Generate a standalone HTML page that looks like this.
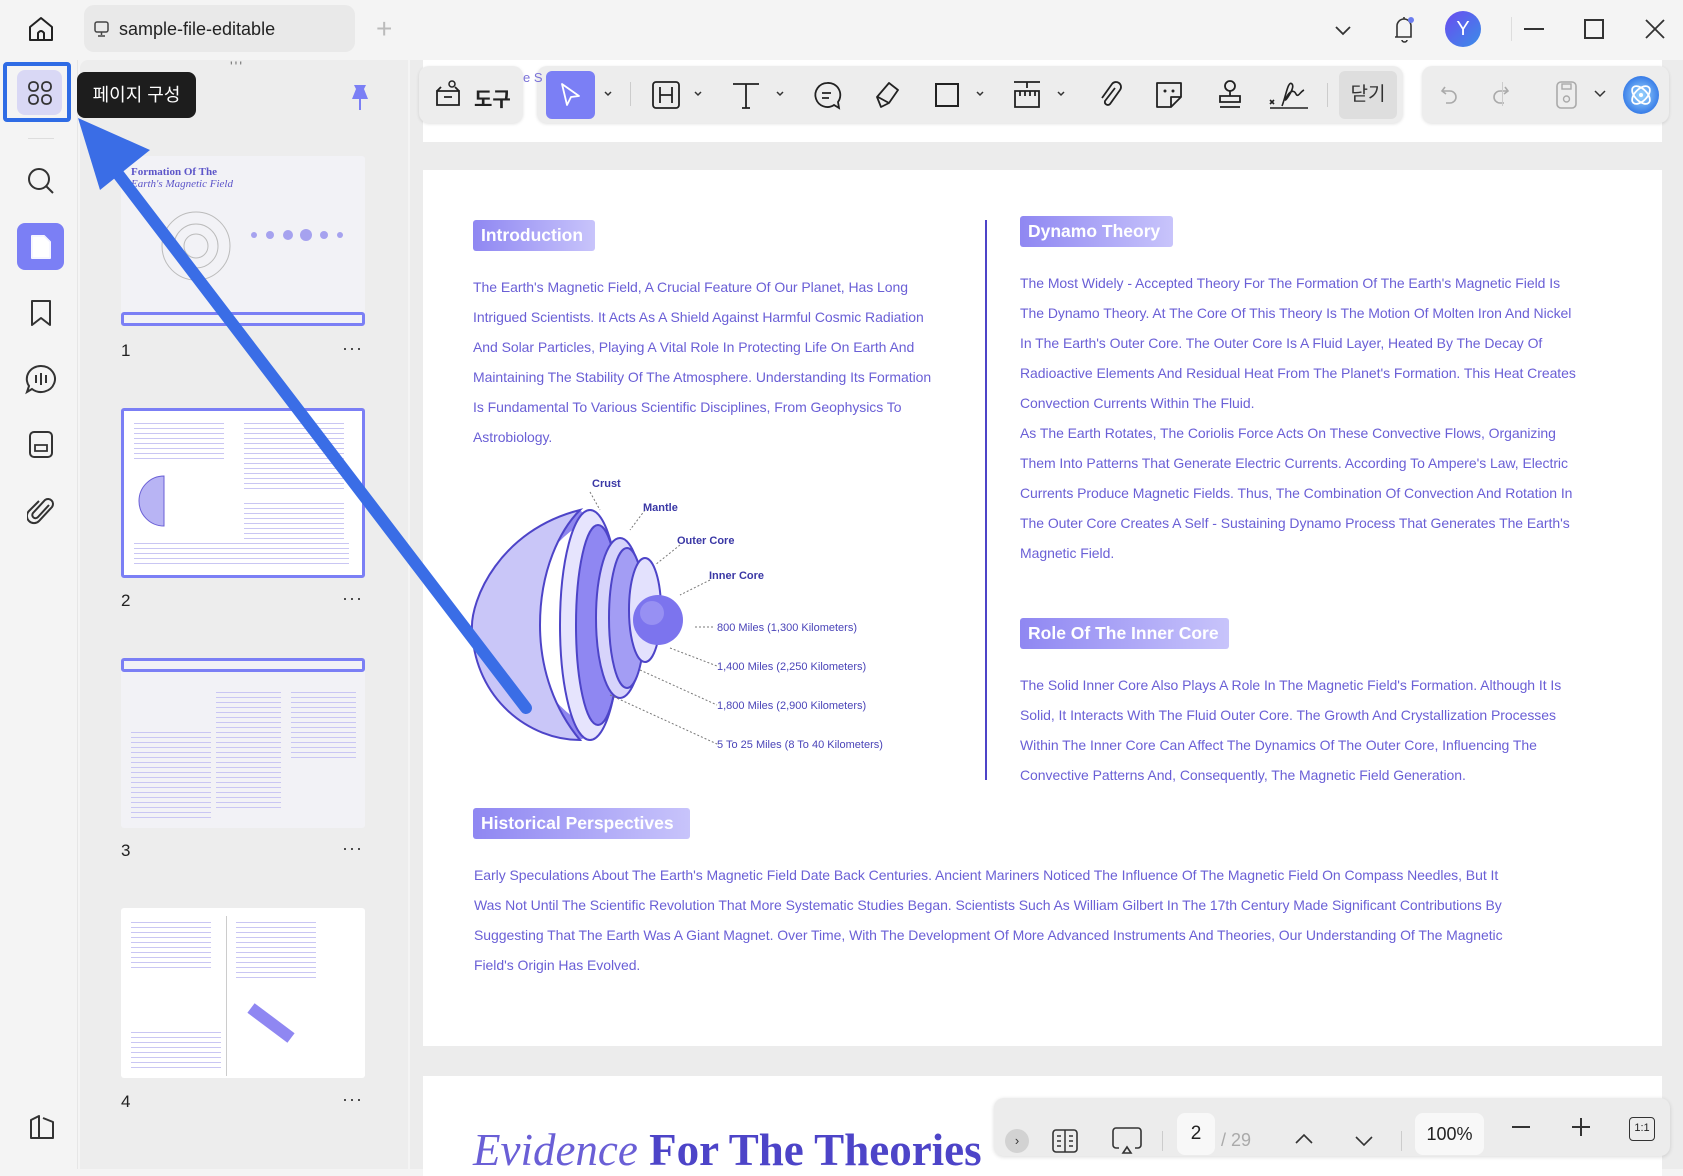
<!DOCTYPE html>
<html><head><meta charset="utf-8"><style>
*{margin:0;padding:0;box-sizing:border-box}
body{width:1683px;height:1169px;background:#f4f4f4;position:relative;overflow:hidden;font-family:"Liberation Sans","Noto Sans CJK KR",sans-serif}
.a{position:absolute}
.t{position:absolute;color:#6a5fd6;font-size:14px;white-space:nowrap;letter-spacing:-0.05px}
.lbl{position:absolute;height:31px;border-radius:3px;background:linear-gradient(90deg,#8f87f2,#c8c4fb);color:#fff;font-weight:bold;font-size:17.5px;line-height:31px;padding-left:8px}
.thumb{position:absolute;left:121px;width:244px;height:170px;background:#f2f2f6;border-radius:3px}
.num{position:absolute;left:121px;font-size:17px;color:#222}
.dots{position:absolute;left:342px;font-size:18px;color:#333;letter-spacing:1px}
svg{position:absolute}
</style></head><body>
<!-- top bar -->
<svg style="left:26px;top:14px" width="30" height="30" viewBox="0 0 30 30"><path d="M4 13 L15 4 L26 13 V26 H4 Z M12 26 V19 Q15 15 18 19 V26" fill="none" stroke="#222" stroke-width="2" stroke-linejoin="round"/></svg>
<div class="a" style="left:84px;top:5px;width:271px;height:47px;background:#e9e9e9;border-radius:10px"></div>
<svg style="left:93px;top:20px" width="18" height="18" viewBox="0 0 18 18"><rect x="2" y="2" width="13" height="10" rx="2" fill="none" stroke="#444" stroke-width="1.5"/><path d="M8.5 12v3M5 16h7" stroke="#444" stroke-width="1.5"/></svg>
<div class="a" style="left:119px;top:19px;font-size:18px;color:#222">sample-file-editable</div>
<div class="a" style="left:376px;top:13px;font-size:28px;color:#bbb;font-weight:200">+</div>
<svg style="left:1333px;top:20px" width="20" height="20"><path d="M3 7l7 7 7-7" fill="none" stroke="#333" stroke-width="1.8"/></svg>
<svg style="left:1390px;top:13px" width="28" height="32" viewBox="0 0 28 32"><path d="M7 24V13a7 7 0 0 1 14 0v11H5M12 27a2.5 2 0 0 0 5 0M14 4v2" fill="none" stroke="#333" stroke-width="1.6"/><circle cx="21" cy="7" r="3" fill="#6b7df0"/></svg>
<div class="a" style="left:1445px;top:11px;width:36px;height:36px;border-radius:50%;background:linear-gradient(135deg,#6a4bf0,#3a8ee8);color:#fff;text-align:center;line-height:36px;font-size:20px">Y</div>
<div class="a" style="left:1511px;top:17px;width:1px;height:24px;background:#ddd"></div>
<div class="a" style="left:1524px;top:28px;width:20px;height:2px;background:#333"></div>
<div class="a" style="left:1584px;top:19px;width:20px;height:20px;border:2px solid #333"></div>
<svg style="left:1644px;top:18px" width="22" height="22"><path d="M2 2l18 18M20 2L2 20" stroke="#333" stroke-width="1.8"/></svg>

<!-- left rail -->
<div class="a" style="left:0;top:60px;width:78px;height:1109px;background:#f4f4f4;border-right:1px solid #e6e6e6"></div>
<div class="a" style="left:3px;top:62px;width:68px;height:60px;border:4px solid #2f6ce5;border-radius:4px"></div>
<div class="a" style="left:17px;top:70px;width:45px;height:45px;background:#d9d8f5;border-radius:8px"></div>
<svg style="left:27px;top:80px" width="26" height="26"><g fill="none" stroke="#333" stroke-width="1.8"><rect x="2" y="2" width="9" height="9" rx="4"/><rect x="15" y="2" width="9" height="9" rx="4"/><rect x="2" y="15" width="9" height="9" rx="4"/><rect x="15" y="15" width="9" height="9" rx="4"/></g></svg>
<div class="a" style="left:28px;top:138px;width:26px;height:1px;background:#ddd"></div>
<svg style="left:26px;top:166px" width="30" height="30"><circle cx="13" cy="13" r="10" fill="none" stroke="#333" stroke-width="2"/><path d="M20 20l7 7" stroke="#333" stroke-width="2"/></svg>
<div class="a" style="left:17px;top:223px;width:47px;height:47px;background:#7b7ff5;border-radius:8px"></div>
<svg style="left:29px;top:233px" width="24" height="28"><path d="M3 3h12l6 6v16H3z" fill="#fff" stroke="#fff" stroke-width="2" stroke-linejoin="round"/><path d="M3 3h12l6 6v16H3z" fill="none" stroke="#eef" stroke-width="1"/></svg>
<svg style="left:28px;top:298px" width="26" height="30"><path d="M4 3h18v24l-9-7-9 7z" fill="none" stroke="#333" stroke-width="2" stroke-linejoin="round"/></svg>
<svg style="left:24px;top:363px" width="34" height="32"><path d="M17 3a14 13 0 1 1-9 23l-5 3 2-6A14 13 0 0 1 17 3z" fill="none" stroke="#333" stroke-width="2"/><path d="M12 12v8M17 10v12M22 12v8" stroke="#333" stroke-width="2"/></svg>
<svg style="left:27px;top:429px" width="28" height="30"><rect x="3" y="3" width="22" height="25" rx="4" fill="none" stroke="#333" stroke-width="2"/><path d="M8 16h12v6H8z" fill="none" stroke="#333" stroke-width="1.8"/></svg>
<svg style="left:27px;top:495px" width="30" height="32"><path d="M22 10L11 22a3 3 0 0 1-5-4L18 5a5 5 0 0 1 7 7L12 26a7 7 0 0 1-10-10L12 6" fill="none" stroke="#333" stroke-width="2"/></svg>
<svg style="left:27px;top:1112px" width="30" height="30"><path d="M4 26V8l8-4v22zM12 26h14V10l-10-4" fill="none" stroke="#333" stroke-width="2" stroke-linejoin="round"/></svg>

<!-- thumbnail panel -->
<div class="a" style="left:80px;top:60px;width:328px;height:1109px;background:#ededed;border-radius:8px 0 0 0"></div>
<div class="a" style="left:230px;top:58px;font-size:14px;color:#777;letter-spacing:2px">'''</div>
<svg style="left:348px;top:82px" width="24" height="30"><path d="M6 3h12l-2 4 4 10H4l4-10z" fill="#7b7ff5"/><path d="M12 17v11" stroke="#7b7ff5" stroke-width="2"/></svg>
<div class="thumb" style="top:156px;height:170px">
 <div class="a" style="left:10px;top:10px;font:bold 11px 'Liberation Serif';color:#5d56c9">Formation Of The<br><i style="font-weight:normal">Earth's Magnetic Field</i></div>
 <svg style="left:30px;top:50px" width="90" height="80"><g fill="none" stroke="#bbb"><circle cx="45" cy="40" r="12"/><circle cx="45" cy="40" r="22"/><circle cx="45" cy="40" r="34"/></g></svg>
 <div class="a" style="left:125px;top:72px;width:100px;height:12px;"><svg width="100" height="14"><g fill="#a6a2ef"><circle cx="8" cy="7" r="3"/><circle cx="24" cy="7" r="4"/><circle cx="42" cy="7" r="5"/><circle cx="60" cy="7" r="6"/><circle cx="78" cy="7" r="4"/><circle cx="94" cy="7" r="3"/></g></svg></div>
 <div class="a" style="left:0;bottom:0;width:244px;height:14px;border:3px solid #7b7ff5;border-radius:3px"></div>
</div>
<div class="num" style="top:341px">1</div><div class="dots" style="top:338px">···</div>
<div class="thumb" style="top:408px;background:#fff;border:3px solid #7b7ff5">
 <div class="a" style="left:10px;top:60px;width:60px;height:60px;"><svg width="60" height="60"><path d="M30 5a25 25 0 1 0 0 50z" fill="#b8b4f4" stroke="#6a5fd6"/></svg></div>
 <div class="a" style="left:10px;top:8px;width:90px;height:40px;background:repeating-linear-gradient(#fff 0 4px,#c9c6f3 4px 5px)"></div>
 <div class="a" style="left:120px;top:8px;width:100px;height:70px;background:repeating-linear-gradient(#fff 0 4px,#c9c6f3 4px 5px)"></div>
 <div class="a" style="left:120px;top:88px;width:100px;height:40px;background:repeating-linear-gradient(#fff 0 4px,#c9c6f3 4px 5px)"></div>
 <div class="a" style="left:10px;top:128px;width:215px;height:28px;background:repeating-linear-gradient(#fff 0 4px,#c9c6f3 4px 5px)"></div>
</div>
<div class="num" style="top:591px">2</div><div class="dots" style="top:588px">···</div>
<div class="thumb" style="top:658px">
 <div class="a" style="left:0;top:0;width:244px;height:14px;border:3px solid #7b7ff5;border-radius:3px"></div>
 <div class="a" style="left:10px;top:70px;width:80px;height:90px;background:repeating-linear-gradient(#f2f2f6 0 4px,#c9c6f3 4px 5px)"></div>
 <div class="a" style="left:95px;top:30px;width:65px;height:120px;background:repeating-linear-gradient(#f2f2f6 0 4px,#c9c6f3 4px 5px)"></div>
 <div class="a" style="left:170px;top:30px;width:65px;height:70px;background:repeating-linear-gradient(#f2f2f6 0 4px,#c9c6f3 4px 5px)"></div>
</div>
<div class="num" style="top:841px">3</div><div class="dots" style="top:838px">···</div>
<div class="thumb" style="top:908px;background:#fff">
 <div class="a" style="left:10px;top:10px;width:80px;height:50px;background:repeating-linear-gradient(#fff 0 4px,#c9c6f3 4px 5px)"></div>
 <div class="a" style="left:105px;top:8px;width:1px;height:160px;background:#ccc"></div>
 <div class="a" style="left:115px;top:10px;width:80px;height:60px;background:repeating-linear-gradient(#fff 0 4px,#c9c6f3 4px 5px)"></div>
 <div class="a" style="left:10px;top:120px;width:90px;height:40px;background:repeating-linear-gradient(#fff 0 4px,#c9c6f3 4px 5px)"></div>
 <svg style="left:120px;top:90px" width="60" height="50"><path d="M10 10l40 30" stroke="#8f87f2" stroke-width="12"/></svg>
</div>
<div class="num" style="top:1092px">4</div><div class="dots" style="top:1089px">···</div>

<!-- main -->
<div class="a" style="left:410px;top:60px;width:1273px;height:1109px;background:#ececec"></div>
<div class="a" style="left:423px;top:60px;width:1239px;height:82px;background:#fff"></div>
<div class="a" style="left:423px;top:170px;width:1239px;height:876px;background:#fff"></div>
<div class="a" style="left:423px;top:1076px;width:1239px;height:100px;background:#fff"></div>

<!-- toolbar -->
<div class="a" style="left:419px;top:66px;width:104px;height:57px;background:#ededed;border-radius:10px;box-shadow:0 1px 3px rgba(0,0,0,.12)"></div>
<svg style="left:433px;top:79px" width="30" height="30"><path d="M4 12h22v14H4z M4 12l4-4M26 12l-4-4M11 18h8" fill="none" stroke="#222" stroke-width="1.8"/><circle cx="19" cy="5" r="3" fill="none" stroke="#222" stroke-width="1.5"/></svg>
<div class="a" style="left:474px;top:83px;font-size:20px;font-weight:bold;color:#222">도구</div>
<div class="a" style="left:537px;top:66px;width:866px;height:57px;background:#ededed;border-radius:10px;box-shadow:0 1px 3px rgba(0,0,0,.12)"></div>
<div class="a" style="left:546px;top:71px;width:49px;height:48px;background:#7b7ff5;border-radius:6px"></div>
<svg style="left:557px;top:81px" width="28" height="28"><path d="M5 3l17 12-8 1-4 8z" fill="none" stroke="#fff" stroke-width="1.8" stroke-linejoin="round"/></svg>
<div class="a" style="left:630px;top:82px;width:1px;height:24px;background:#ccc"></div>
<svg style="left:600px;top:88px" width="800" height="14"><g fill="none" stroke="#333" stroke-width="1.5"><path d="M5 4l3 3 3-3"/><path d="M95 4l3 3 3-3"/><path d="M177 4l3 3 3-3"/><path d="M377 4l3 3 3-3"/><path d="M458 4l3 3 3-3"/></g></svg>
<svg style="left:650px;top:79px" width="32" height="32"><rect x="3" y="3" width="26" height="26" rx="3" fill="none" stroke="#222" stroke-width="1.8"/><path d="M10 8v16M22 8v16M10 16h12" stroke="#222" stroke-width="1.8"/></svg>
<svg style="left:730px;top:79px" width="32" height="32"><path d="M3 5h26M16 5v24M12 29h8" fill="none" stroke="#222" stroke-width="1.8"/></svg>
<svg style="left:812px;top:80px" width="30" height="30"><path d="M15 3a12 12 0 1 0 7 22l5 3-1-6A12 12 0 0 0 15 3z" fill="none" stroke="#222" stroke-width="1.8"/><path d="M10 13h9M10 18h7" stroke="#222" stroke-width="1.8"/></svg>
<svg style="left:873px;top:79px" width="30" height="32"><path d="M8 28l-4-10 12-14 9 7-9 13z M5 18l11 6" fill="none" stroke="#222" stroke-width="1.8" stroke-linejoin="round"/></svg>
<div class="a" style="left:935px;top:83px;width:24px;height:24px;border:2px solid #222"></div>
<svg style="left:1011px;top:79px" width="32" height="32"><path d="M3 3h26M16 3v6M4 12h24v16H4z M9 12v5M14 12v5M19 12v5M24 12v5" fill="none" stroke="#222" stroke-width="1.8"/></svg>
<svg style="left:1095px;top:79px" width="30" height="32"><path d="M20 9L10 22a3 3 0 0 0 5 3L25 11a5 5 0 0 0-8-6L7 19" fill="none" stroke="#222" stroke-width="1.8"/></svg>
<svg style="left:1153px;top:79px" width="32" height="32"><path d="M4 4h24v14l-10 10H4z M28 18h-10v10" fill="none" stroke="#222" stroke-width="1.8" stroke-linejoin="round"/><circle cx="12" cy="12" r="1.5" fill="#222"/><circle cx="20" cy="12" r="1.5" fill="#222"/></svg>
<svg style="left:1214px;top:78px" width="32" height="34"><circle cx="16" cy="8" r="5" fill="none" stroke="#222" stroke-width="1.8"/><path d="M16 13v5M6 18h20v6H6zM6 29h20" fill="none" stroke="#222" stroke-width="1.8"/></svg>
<svg style="left:1268px;top:78px" width="44" height="34"><path d="M2 22l4 4M6 22l-4 4M14 28c4-10 6-26 10-22s-10 22-6 14 8-8 10-4 4-2 8-4M2 30h38" fill="none" stroke="#222" stroke-width="1.6"/></svg>
<div class="a" style="left:1327px;top:83px;width:1px;height:24px;background:#ccc"></div>
<div class="a" style="left:1339px;top:71px;width:58px;height:48px;background:#dedede;border-radius:6px;font-size:19px;color:#333;text-align:center;line-height:48px">닫기</div>
<div class="a" style="left:1422px;top:66px;width:247px;height:57px;background:#ededed;border-radius:10px;box-shadow:0 1px 3px rgba(0,0,0,.12)"></div>
<svg style="left:1440px;top:82px" width="100" height="26"><g fill="none" stroke="#aaa" stroke-width="1.6"><path d="M5 5L2 9l4 3M2 9h8a6 6 0 0 1 0 12H6"/><path d="M65 5l3 4-4 3M68 9h-8a6 6 0 0 0 0 12h4"/></g></svg>
<div class="a" style="left:1502px;top:82px;width:1px;height:24px;background:#ccc"></div>
<svg style="left:1554px;top:80px" width="26" height="30"><rect x="3" y="2" width="19" height="26" rx="4" fill="none" stroke="#aaa" stroke-width="1.6"/><rect x="8" y="4" width="9" height="5" fill="none" stroke="#aaa" stroke-width="1.4"/><circle cx="12.5" cy="19" r="3" fill="none" stroke="#aaa" stroke-width="1.4"/></svg>
<svg style="left:1593px;top:88px" width="14" height="12"><path d="M2 3l5 5 5-5" fill="none" stroke="#333" stroke-width="1.5"/></svg>
<div class="a" style="left:1623px;top:76px;width:36px;height:38px;border-radius:50%;background:radial-gradient(circle,#9ed8ff,#3a7ee8 70%)"></div>
<svg style="left:1627px;top:81px" width="28" height="28"><g fill="none" stroke="#fff" stroke-width="1.8"><ellipse cx="14" cy="14" rx="11" ry="6" transform="rotate(45 14 14)"/><ellipse cx="14" cy="14" rx="11" ry="6" transform="rotate(-45 14 14)"/></g><circle cx="14" cy="14" r="2" fill="#fff"/></svg>
<div class="a" style="left:523px;top:70px;font-size:13px;color:#7a72d8">e S</div>

<!-- page content -->
<div class="lbl" style="left:473px;top:220px;width:122px">Introduction</div>
<div class="t" style="left:473px;top:279px">The Earth's Magnetic Field, A Crucial Feature Of Our Planet, Has Long</div>
<div class="t" style="left:473px;top:309px">Intrigued Scientists. It Acts As A Shield Against Harmful Cosmic Radiation</div>
<div class="t" style="left:473px;top:339px">And Solar Particles, Playing A Vital Role In Protecting Life On Earth And</div>
<div class="t" style="left:473px;top:369px">Maintaining The Stability Of The Atmosphere. Understanding Its Formation</div>
<div class="t" style="left:473px;top:399px">Is Fundamental To Various Scientific Disciplines, From Geophysics To</div>
<div class="t" style="left:473px;top:429px">Astrobiology.</div>

<svg style="left:460px;top:470px" width="450" height="300" viewBox="0 0 450 300">
 <path d="M120 40 A110 125 0 0 0 120 270 L140 260 A95 110 0 0 1 130 50 Z" fill="#8e86ee"/>
 <path d="M120 40 C40 60 10 130 12 160 C15 230 70 270 120 270 C95 240 80 200 80 155 C80 100 100 60 120 40Z" fill="#c9c6f8" stroke="#4d44c8" stroke-width="2"/>
 <ellipse cx="130" cy="155" rx="30" ry="115" fill="#e6e4fd" stroke="#4d44c8" stroke-width="2"/>
 <ellipse cx="138" cy="155" rx="22" ry="100" fill="#8f87f2" stroke="#4d44c8" stroke-width="2"/>
 <ellipse cx="160" cy="148" rx="24" ry="80" fill="#d7d4fb" stroke="#4d44c8" stroke-width="2"/>
 <ellipse cx="167" cy="148" rx="18" ry="70" fill="#a39df4" stroke="#4d44c8" stroke-width="2"/>
 <ellipse cx="185" cy="140" rx="16" ry="52" fill="#e3e1fd" stroke="#4d44c8" stroke-width="2"/>
 <circle cx="198" cy="150" r="25" fill="#7c74ee"/>
 <circle cx="192" cy="143" r="12" fill="#a29cf5" opacity=".7"/>
 <g stroke="#777" stroke-width="1" stroke-dasharray="2 2" fill="none">
  <path d="M235 157H255M210 178L257 196M180 200L257 235M150 225L257 274M130 22L140 40M185 40L170 60M220 75L195 95M250 110L220 125"/>
 </g>
 <g font-size="11" font-weight="bold" fill="#3a37a5" font-family="Liberation Sans">
  <text x="132" y="17">Crust</text><text x="183" y="41">Mantle</text><text x="217" y="74">Outer Core</text><text x="249" y="109">Inner Core</text>
 </g>
 <g font-size="11" fill="#4a44b8" font-family="Liberation Sans">
  <text x="257" y="161">800 Miles (1,300 Kilometers)</text>
  <text x="257" y="200">1,400 Miles (2,250 Kilometers)</text>
  <text x="257" y="239">1,800 Miles (2,900 Kilometers)</text>
  <text x="257" y="278">5 To 25 Miles (8 To 40 Kilometers)</text>
 </g>
</svg>

<div class="a" style="left:985px;top:220px;width:2px;height:560px;background:#4d44c8"></div>

<div class="lbl" style="left:1020px;top:216px;width:153px">Dynamo Theory</div>
<div class="t" style="left:1020px;top:275px">The Most Widely - Accepted Theory For The Formation Of The Earth's Magnetic Field Is</div>
<div class="t" style="left:1020px;top:305px">The Dynamo Theory. At The Core Of This Theory Is The Motion Of Molten Iron And Nickel</div>
<div class="t" style="left:1020px;top:335px">In The Earth's Outer Core. The Outer Core Is A Fluid Layer, Heated By The Decay Of</div>
<div class="t" style="left:1020px;top:365px">Radioactive Elements And Residual Heat From The Planet's Formation. This Heat Creates</div>
<div class="t" style="left:1020px;top:395px">Convection Currents Within The Fluid.</div>
<div class="t" style="left:1020px;top:425px">As The Earth Rotates, The Coriolis Force Acts On These Convective Flows, Organizing</div>
<div class="t" style="left:1020px;top:455px">Them Into Patterns That Generate Electric Currents. According To Ampere's Law, Electric</div>
<div class="t" style="left:1020px;top:485px">Currents Produce Magnetic Fields. Thus, The Combination Of Convection And Rotation In</div>
<div class="t" style="left:1020px;top:515px">The Outer Core Creates A Self - Sustaining Dynamo Process That Generates The Earth's</div>
<div class="t" style="left:1020px;top:545px">Magnetic Field.</div>

<div class="lbl" style="left:1020px;top:618px;width:209px">Role Of The Inner Core</div>
<div class="t" style="left:1020px;top:677px">The Solid Inner Core Also Plays A Role In The Magnetic Field's Formation. Although It Is</div>
<div class="t" style="left:1020px;top:707px">Solid, It Interacts With The Fluid Outer Core. The Growth And Crystallization Processes</div>
<div class="t" style="left:1020px;top:737px">Within The Inner Core Can Affect The Dynamics Of The Outer Core, Influencing The</div>
<div class="t" style="left:1020px;top:767px">Convective Patterns And, Consequently, The Magnetic Field Generation.</div>

<div class="lbl" style="left:473px;top:808px;width:217px">Historical Perspectives</div>
<div class="t" style="left:474px;top:867px">Early Speculations About The Earth's Magnetic Field Date Back Centuries. Ancient Mariners Noticed The Influence Of The Magnetic Field On Compass Needles, But It</div>
<div class="t" style="left:474px;top:897px">Was Not Until The Scientific Revolution That More Systematic Studies Began. Scientists Such As William Gilbert In The 17th Century Made Significant Contributions By</div>
<div class="t" style="left:474px;top:927px">Suggesting That The Earth Was A Giant Magnet. Over Time, With The Development Of More Advanced Instruments And Theories, Our Understanding Of The Magnetic</div>
<div class="t" style="left:474px;top:957px">Field's Origin Has Evolved.</div>

<div class="a" style="left:473px;top:1124px;font-family:'Liberation Serif',serif;font-size:45px;color:#4d44c8;white-space:nowrap"><i style="color:#6a5fd6">Evidence</i> <b>For The Theories</b></div>

<!-- bottom bar -->
<div class="a" style="left:994px;top:1098px;width:676px;height:58px;background:#ececec;border-radius:10px;box-shadow:0 1px 4px rgba(0,0,0,.15)"></div>
<div class="a" style="left:1005px;top:1129px;width:24px;height:24px;border-radius:50%;background:#d2d2d2;text-align:center;line-height:23px;font-size:13px;color:#333">›</div>
<svg style="left:1051px;top:1127px" width="28" height="28"><rect x="2" y="3" width="24" height="22" rx="3" fill="none" stroke="#333" stroke-width="1.6"/><path d="M14 3v22M6 9h4M6 14h4M6 19h4M18 9h4M18 14h4M18 19h4" stroke="#333" stroke-width="1.5"/></svg>
<svg style="left:1111px;top:1126px" width="32" height="30"><path d="M8 22H5a3 3 0 0 1-3-3V5a3 3 0 0 1 3-3h22a3 3 0 0 1 3 3v14a3 3 0 0 1-3 3h-3M12 27l4-6 4 6z" fill="none" stroke="#333" stroke-width="1.6"/></svg>
<div class="a" style="left:1162px;top:1131px;width:1px;height:20px;background:#ccc"></div>
<div class="a" style="left:1177px;top:1113px;width:38px;height:42px;background:#f8f8f8;border-radius:8px;text-align:center;line-height:42px;font-size:19px;color:#222">2</div>
<div class="a" style="left:1221px;top:1130px;font-size:18px;color:#aaa">/ 29</div>
<svg style="left:1293px;top:1132px" width="22" height="14"><path d="M3 11l8-8 8 8" fill="none" stroke="#333" stroke-width="1.6"/></svg>
<svg style="left:1353px;top:1134px" width="22" height="14"><path d="M3 3l8 8 8-8" fill="none" stroke="#333" stroke-width="1.6"/></svg>
<div class="a" style="left:1401px;top:1131px;width:1px;height:20px;background:#ccc"></div>
<div class="a" style="left:1415px;top:1113px;width:69px;height:42px;background:#f8f8f8;border-radius:8px;text-align:center;line-height:42px;font-size:18px;color:#222">100%</div>
<div class="a" style="left:1512px;top:1126px;width:18px;height:2px;background:#333"></div>
<div class="a" style="left:1572px;top:1126px;width:18px;height:2px;background:#333"></div>
<div class="a" style="left:1580px;top:1118px;width:2px;height:18px;background:#333"></div>
<div class="a" style="left:1629px;top:1117px;width:26px;height:24px;border:1.6px solid #333;border-radius:4px;font-size:11px;text-align:center;line-height:21px;color:#222">1:1</div>

<!-- tooltip -->
<div class="a" style="left:77px;top:72px;width:119px;height:46px;background:#1d1d1d;border-radius:8px;color:#fff;font-size:18px;line-height:46px;text-align:center">페이지 구성</div>

<!-- blue arrow -->
<svg style="left:0;top:0" width="600" height="760"><line x1="526" y1="708" x2="115" y2="170" stroke="#3a6de6" stroke-width="12" stroke-linecap="round"/><path d="M78 118 L150 150 L100 190 Z" fill="#3a6de6"/></svg>
</body></html>
